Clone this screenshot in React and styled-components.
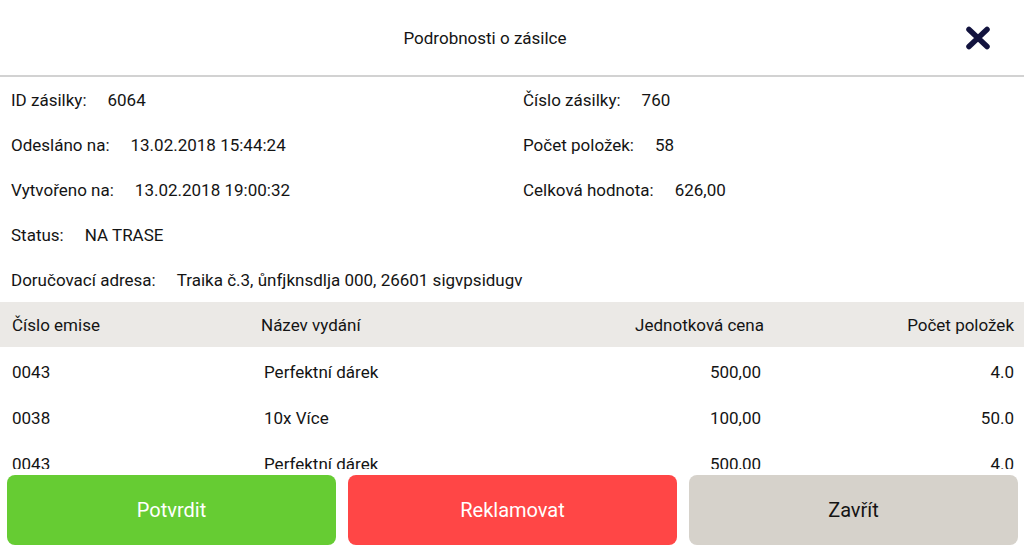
import React from 'react';
import styled, { createGlobalStyle } from 'styled-components';

const GlobalStyle = createGlobalStyle`
  html, body {
    margin: 0;
    padding: 0;
    background: #fff;
  }
  body {
    font-family: Roboto, "Noto Sans", "Liberation Sans", sans-serif;
    color: #141414;
  }
`

const Page = styled.div`
  width: 1024px;
  height: 548px;
  display: flex;
  flex-direction: column;
  overflow: hidden;
  background: #fff;
`

const Header = styled.div`
  height: 75px;
  flex-shrink: 0;
  display: flex;
  align-items: center;
  border-bottom: 2px solid #d2d2d2;
`

const Title = styled.div`
  flex: 1;
  text-align: center;
  padding-left: 6px;
  font-size: 17px;
`

const CloseButton = styled.button`
  width: 28px;
  height: 28px;
  margin: 0 32px 0 0;
  padding: 0;
  border: none;
  background: none;
  cursor: pointer;
  display: flex;
  align-items: center;
  justify-content: center;
`

const Info = styled.div`
  flex-shrink: 0;
  display: grid;
  grid-template-columns: 512px 1fr;
`

const InfoRow = styled.div`
  height: 45px;
  display: flex;
  align-items: center;
  padding-left: 11px;
  font-size: 17px;
  white-space: nowrap;
  grid-column: ${p => (p.wide ? '1 / span 2' : 'auto')};
`

const Value = styled.span`
  margin-left: 21px;
`

const Body = styled.div`
  flex: 1;
  overflow: hidden;
`

const Row = styled.div`
  box-sizing: border-box;
  display: grid;
  grid-template-columns: 249px 250px 253px 1fr;
  align-items: center;
  padding: ${p => (p.head ? '0' : '4px')} 10px 0 12px;
  height: ${p => (p.head ? '45px' : '46px')};
  background: ${p => (p.head ? '#ebe9e6' : '#fff')};
  font-size: 17px;
`

const Cell = styled.div`
  text-align: ${p => (p.num ? 'right' : 'left')};
  padding-left: ${p => (p.shift ? '3px' : '0')};
  padding-right: ${p => (p.pull ? '3px' : '0')};
  white-space: nowrap;
`

const Footer = styled.div`
  flex-shrink: 0;
  display: flex;
  gap: 12px;
  padding: 6px 6px 3px 7px;
`

const Button = styled.button`
  flex: 1;
  height: 70px;
  border: none;
  border-radius: 8px;
  background: ${p => p.bg};
  color: ${p => p.fg};
  font-family: Roboto, "Noto Sans", "Liberation Sans", sans-serif;
  font-size: 20px;
  cursor: pointer;
`

const CloseIcon = () => (
  <svg width="26" height="24" viewBox="0 0 26 24">
    <path d="M4 3.5 L22 20.5 M22 3.5 L4 20.5" stroke="#12133e" strokeWidth="5.5" strokeLinecap="round" fill="none" />
  </svg>
)

const items = [
  { id: '0043', name: 'Perfektní dárek', price: '500,00', qty: '4.0' },
  { id: '0038', name: '10x Více', price: '100,00', qty: '50.0' },
  { id: '0043', name: 'Perfektní dárek', price: '500,00', qty: '4.0' },
]

export default function App() {
  return (
    <Page>
      <GlobalStyle />
      <Header>
        <Title>Podrobnosti o zásilce</Title>
        <CloseButton><CloseIcon /></CloseButton>
      </Header>
      <Info>
        <InfoRow>ID zásilky:<Value>6064</Value></InfoRow>
        <InfoRow>Číslo zásilky:<Value>760</Value></InfoRow>
        <InfoRow>Odesláno na:<Value>13.02.2018 15:44:24</Value></InfoRow>
        <InfoRow>Počet položek:<Value>58</Value></InfoRow>
        <InfoRow>Vytvořeno na:<Value>13.02.2018 19:00:32</Value></InfoRow>
        <InfoRow>Celková hodnota:<Value>626,00</Value></InfoRow>
        <InfoRow wide>Status:<Value>NA TRASE</Value></InfoRow>
        <InfoRow wide>Doručovací adresa:<Value>Traika č.3, ůnfjknsdlja 000, 26601 sigvpsidugv</Value></InfoRow>
      </Info>
      <Body>
        <Row head>
          <Cell>Číslo emise</Cell>
          <Cell>Název vydání</Cell>
          <Cell num>Jednotková cena</Cell>
          <Cell num>Počet položek</Cell>
        </Row>
        {items.map((it, i) => (
          <Row key={i}>
            <Cell>{it.id}</Cell>
            <Cell shift>{it.name}</Cell>
            <Cell num pull>{it.price}</Cell>
            <Cell num>{it.qty}</Cell>
          </Row>
        ))}
      </Body>
      <Footer>
        <Button bg="#66cc33" fg="#fff">Potvrdit</Button>
        <Button bg="#ff4646" fg="#fff">Reklamovat</Button>
        <Button bg="#d6d2cb" fg="#141414">Zavřít</Button>
      </Footer>
    </Page>
  );
}
